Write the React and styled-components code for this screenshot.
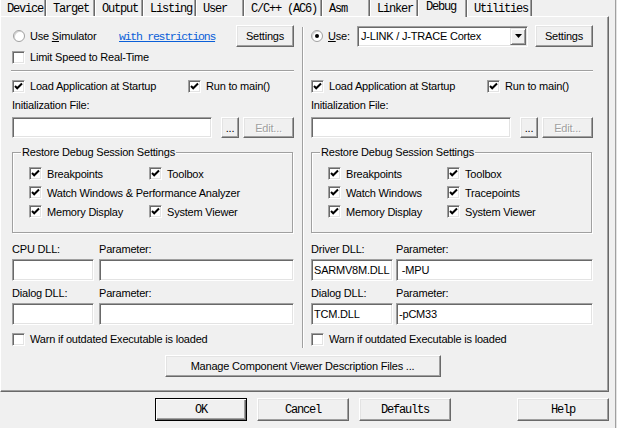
import styled, { createGlobalStyle } from "styled-components";

const MONO = `"Liberation Mono", "DejaVu Sans Mono", monospace`;

const GlobalStyle = createGlobalStyle`
  html, body { margin: 0; padding: 0; background: #f0f0f0; }
  body {
    font-family: "Liberation Sans", Arial, sans-serif;
    font-size: 11px;
    letter-spacing: -0.2px;
    color: #000;
  }
  * { box-sizing: border-box; }
`;

const tabs = [
  { label: "Device", w: 46 },
  { label: "Target", w: 49 },
  { label: "Output", w: 48 },
  { label: "Listing", w: 53 },
  { label: "User", w: 48 },
  { label: "C/C++ (AC6)", w: 78 },
  { label: "Asm", w: 48 },
  { label: "Linker", w: 48 },
  { label: "Debug", w: 49, active: true },
  { label: "Utilities", w: 65 },
];

const CheckMark = () => (
  <svg width="9" height="9" viewBox="0 0 9 9">
    <path d="M1 4 L3.2 6.3 L8 1.5" stroke="#000" strokeWidth="2" fill="none" />
  </svg>
);

const Check = ({ checked, children, wide }) => (
  <CheckLabel $wide={wide}>
    <Box>{checked && <CheckMark />}</Box>
    <span>{children}</span>
  </CheckLabel>
);

const LeftColumn = () => (
  <Column>
    <Row $h={22}>
      <Choice $w={107} $pad={1}>
        <Radio />
        <span>
          Use <u>S</u>imulator
        </span>
      </Choice>
      <Link>with restrictions</Link>
      <Button $w={58} $push>
        Settings
      </Button>
    </Row>
    <Row $h={20}>
      <Check>Limit Speed to Real-Time</Check>
    </Row>
    <Etched />
    <Row $h={18} $mt={5}>
      <Cell $w={176}>
        <Check checked>Load Application at Startup</Check>
      </Cell>
      <Check checked>Run to main()</Check>
    </Row>
    <Row $h={18} $mt={1}>
      Initialization File:
    </Row>
    <FileRow />
    <Group>
      <GroupTitle>Restore Debug Session Settings</GroupTitle>
      <Check checked>Breakpoints</Check>
      <Check checked>Toolbox</Check>
      <Check checked wide>
        Watch Windows &amp; Performance Analyzer
      </Check>
      <Check checked>Memory Display</Check>
      <Check checked>System Viewer</Check>
    </Group>
    <DllBlock gap={5} rows={[["CPU DLL:", "", ""], ["Dialog DLL:", "", ""]]} />
  </Column>
);

const RightColumn = () => (
  <Column>
    <Row $h={22}>
      <Choice $w={46}>
        <Radio checked />
        <span>
          <u>U</u>se:
        </span>
      </Choice>
      <Combo>
        <span>J-LINK / J-TRACE Cortex</span>
        <ComboArrow>
          <svg width="7" height="4" viewBox="0 0 7 4">
            <path d="M0 0 H7 L3.5 4 Z" fill="#000" />
          </svg>
        </ComboArrow>
      </Combo>
      <Button $w={58} $push>
        Settings
      </Button>
    </Row>
    <Row $h={20} />
    <Etched />
    <Row $h={18} $mt={5}>
      <Cell $w={176}>
        <Check checked>Load Application at Startup</Check>
      </Cell>
      <Check checked>Run to main()</Check>
    </Row>
    <Row $h={18} $mt={1}>
      Initialization File:
    </Row>
    <FileRow />
    <Group $col={119}>
      <GroupTitle>Restore Debug Session Settings</GroupTitle>
      <Check checked>Breakpoints</Check>
      <Check checked>Toolbox</Check>
      <Check checked>Watch Windows</Check>
      <Check checked>Tracepoints</Check>
      <Check checked>Memory Display</Check>
      <Check checked>System Viewer</Check>
    </Group>
    <DllBlock
      gap={3}
      rows={[
        ["Driver DLL:", "SARMV8M.DLL", " -MPU"],
        ["Dialog DLL:", "TCM.DLL", "-pCM33"],
      ]}
    />
  </Column>
);

const FileRow = () => (
  <Row $h={21} $mt={3}>
    <TextBox $w={200} />
    <Button $w={18} $h={21} $ml={9}>
      ...
    </Button>
    <Button $w={51} $h={21} $ml={4} disabled>
      Edit...
    </Button>
  </Row>
);

const DllBlock = ({ gap, rows }) => (
  <>
    {rows.map(([label, dll, param], i) => (
      <div key={label + i}>
        <Fields $gap={gap} $h={18} $mt={i === 0 ? 7 : 3}>
          <span>{label}</span>
          <span>Parameter:</span>
        </Fields>
        <Fields $gap={gap} $h={22} $mt={1}>
          <TextBox>{dll}</TextBox>
          <TextBox>{param}</TextBox>
        </Fields>
      </div>
    ))}
    <Row $h={18} $mt={5}>
      <Check>Warn if outdated Executable is loaded</Check>
    </Row>
  </>
);

export default function App() {
  return (
    <>
      <GlobalStyle />
      <Window>
        <TabBar>
          {tabs.map((t) => (
            <Tab key={t.label} $w={t.w} $active={t.active}>
              {t.label}
            </Tab>
          ))}
        </TabBar>
        <Pane>
          <Columns>
            <LeftColumn />
            <Divider />
            <RightColumn />
          </Columns>
          <ManageRow>
            <Button $w={276}>Manage Component Viewer Description Files ...</Button>
          </ManageRow>
        </Pane>
        <Footer>
          <FooterButton $default>OK</FooterButton>
          <FooterButton>Cancel</FooterButton>
          <FooterButton>Defaults</FooterButton>
          <FooterButton $push>Help</FooterButton>
        </Footer>
      </Window>
    </>
  );
}

const Window = styled.div`
  width: 617px;
  height: 428px;
  display: flex;
  flex-direction: column;
  background: #f0f0f0;
  overflow: hidden;
  box-shadow: inset -1px 0 #e3e3e3, inset -2px 0 #a0a0a0;
`;

const TabBar = styled.div`
  display: flex;
  align-items: flex-end;
  height: 16px;
`;

const Tab = styled.div`
  position: relative;
  z-index: ${(p) => (p.$active ? 1 : 0)};
  width: ${(p) => p.$w}px;
  height: ${(p) => (p.$active ? 17 : 16)}px;
  margin-bottom: ${(p) => (p.$active ? -1 : 0)}px;
  padding: ${(p) => (p.$active ? "1px 0 0 7px" : "3px 0 0 6px")};
  font-family: ${MONO};
  font-size: 12px;
  letter-spacing: -1.2px;
  line-height: 12px;
  white-space: nowrap;
  background: #f0f0f0;
  border-left: 1px solid #fff;
  border-right: 1px solid #696969;
  box-shadow: inset -1px 0 #a0a0a0;
`;

const Pane = styled.div`
  width: 609px;
  border-top: 1px solid #fff;
  border-left: 1px solid #fff;
  border-right: 1px solid #696969;
  border-bottom: 1px solid #696969;
  box-shadow: inset -1px -1px #a0a0a0;
  padding: 8px 0 14px 11px;
`;

const Columns = styled.div`
  display: grid;
  grid-template-columns: 282px 17px 282px;
`;

const Divider = styled.div`
  width: 2px;
  margin: 2px 0 0 8px;
  border-left: 1px solid #a0a0a0;
  border-right: 1px solid #fff;
`;

const Column = styled.div`
  display: flex;
  flex-direction: column;
`;

const Row = styled.div`
  display: flex;
  align-items: center;
  height: ${(p) => p.$h}px;
  margin-top: ${(p) => p.$mt || 0}px;
  white-space: nowrap;
`;

const Cell = styled.div`
  width: ${(p) => p.$w}px;
  flex: none;
`;

const Choice = styled.div`
  display: flex;
  align-items: center;
  gap: 5px;
  width: ${(p) => p.$w}px;
  padding-left: ${(p) => p.$pad || 0}px;
  flex: none;
`;

const Radio = styled.span`
  width: 12px;
  height: 12px;
  flex: none;
  border-radius: 50%;
  background: #fff;
  border: 1px solid #a0a0a0;
  box-shadow: inset 1px 1px #d4d4d4;
  display: flex;
  align-items: center;
  justify-content: center;

  &::after {
    content: "";
    width: 4px;
    height: 4px;
    border-radius: 50%;
    background: ${(p) => (p.checked ? "#000" : "transparent")};
  }
`;

const Link = styled.span`
  font-family: ${MONO};
  font-size: 11.5px;
  letter-spacing: -1.25px;
  color: #0a5fd8;
  text-decoration: underline;
`;

const CheckLabel = styled.label`
  display: flex;
  align-items: center;
  gap: 5px;
  white-space: nowrap;
  grid-column: ${(p) => (p.$wide ? "1 / -1" : "auto")};
`;

const Box = styled.span`
  width: 13px;
  height: 13px;
  flex: none;
  display: flex;
  align-items: center;
  justify-content: center;
  background: #fff;
  border: 1px solid;
  border-color: #a0a0a0 #fff #fff #a0a0a0;
  box-shadow: inset 1px 1px #696969, inset -1px -1px #e3e3e3;
`;

const Button = styled.button`
  flex: none;
  width: ${(p) => p.$w}px;
  height: ${(p) => p.$h || 22}px;
  margin-left: ${(p) => (p.$push ? "auto" : `${p.$ml || 0}px`)};
  padding: 0;
  font: inherit;
  letter-spacing: -0.2px;
  color: ${(p) => (p.disabled ? "#a0a0a0" : "#000")};
  text-shadow: ${(p) => (p.disabled ? "1px 1px #fff" : "none")};
  background: #f0f0f0;
  border: 1px solid;
  border-color: #fff #696969 #696969 #fff;
  box-shadow: inset -1px -1px #a0a0a0, inset 1px 1px #e3e3e3;
`;

const Combo = styled.div`
  width: 171px;
  height: 21px;
  display: flex;
  align-items: center;
  padding: 0 1px 0 3px;
  background: #fff;
  border: 1px solid;
  border-color: #a0a0a0 #fff #fff #a0a0a0;
  box-shadow: inset 1px 1px #696969, inset -1px -1px #e3e3e3;
`;

const ComboArrow = styled.span`
  margin-left: auto;
  width: 16px;
  height: 17px;
  display: flex;
  align-items: center;
  justify-content: center;
  background: #f0f0f0;
  border: 1px solid;
  border-color: #e3e3e3 #696969 #696969 #e3e3e3;
  box-shadow: inset 1px 1px #fff, inset -1px -1px #a0a0a0;
`;

const Etched = styled.div`
  width: 283px;
  height: 2px;
  margin: 3px 0 0 -1px;
  border-top: 1px solid #a0a0a0;
  border-bottom: 1px solid #fff;
`;

const TextBox = styled.div`
  width: ${(p) => (p.$w ? `${p.$w}px` : "auto")};
  height: 21px;
  flex: none;
  display: flex;
  align-items: center;
  padding-left: 2px;
  white-space: pre;
  background: #fff;
  border: 1px solid;
  border-color: #a0a0a0 #fff #fff #a0a0a0;
  box-shadow: inset 1px 1px #696969, inset -1px -1px #e3e3e3;
`;

const Fields = styled.div`
  display: grid;
  grid-template-columns: 82px 1fr;
  column-gap: ${(p) => p.$gap}px;
  align-items: center;
  height: ${(p) => p.$h}px;
  margin-top: ${(p) => p.$mt || 0}px;

  & > ${TextBox} {
    height: ${(p) => p.$h}px;
  }
`;

const Group = styled.div`
  position: relative;
  width: 281px;
  height: 81px;
  margin-top: 14px;
  padding: 11px 0 0 16px;
  display: grid;
  grid-template-columns: ${(p) => p.$col || 120}px auto;
  grid-auto-rows: 19px;
  align-items: center;
  border: 1px solid #a0a0a0;
  box-shadow: inset 1px 1px #fff, 1px 1px #fff;
`;

const GroupTitle = styled.span`
  position: absolute;
  top: -7px;
  left: 8px;
  padding: 0 1px;
  line-height: 13px;
  background: #f0f0f0;
  white-space: nowrap;
`;

const ManageRow = styled.div`
  width: 581px;
  margin-top: 7px;
  display: flex;
  justify-content: center;
`;

const Footer = styled.div`
  display: flex;
  gap: 10px;
  padding: 6px 8px 0 155px;
`;

const FooterButton = styled.button`
  width: 92px;
  height: 23px;
  margin-left: ${(p) => (p.$push ? "auto" : "0")};
  padding: 0;
  font-family: ${MONO};
  font-size: 12px;
  letter-spacing: -1.2px;
  color: #000;
  background: #f0f0f0;
  border: 1px solid;
  border-color: ${(p) => (p.$default ? "#000" : "#fff #696969 #696969 #fff")};
  box-shadow: ${(p) =>
    p.$default
      ? "inset 1px 1px #fff, inset -1px -1px #696969, inset -2px -2px #a0a0a0"
      : "inset -1px -1px #a0a0a0, inset 1px 1px #e3e3e3"};
`;
